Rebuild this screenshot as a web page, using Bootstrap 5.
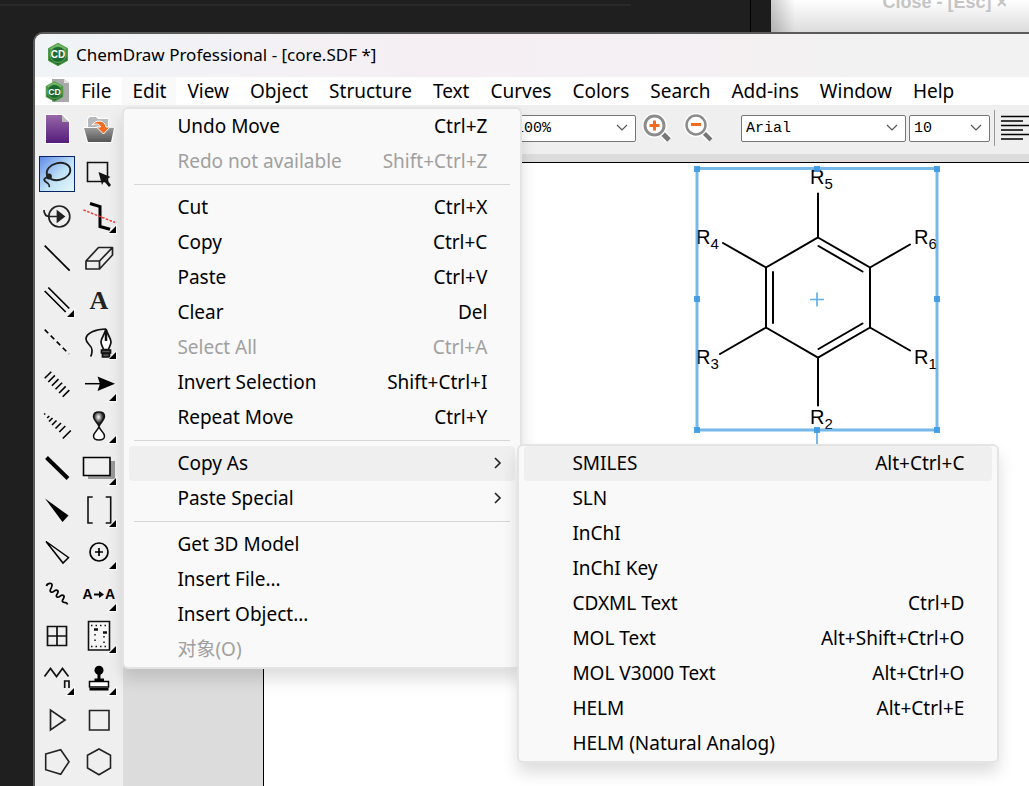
<!DOCTYPE html>
<html lang="en">
<head>
<meta charset="utf-8">
<meta name="viewport" content="width=device-width, initial-scale=1">
<title>ChemDraw Professional - [core.SDF *]</title>
<link href="https://cdn.jsdelivr.net/npm/bootstrap@5.3.0/dist/css/bootstrap.min.css" rel="stylesheet">
<style>
  body { background: #1f1f1f; color: #000; font: 19px/24px "Noto Sans", "Noto Sans CJK SC", sans-serif; }
  .behind-dark { background: #1f1f1f; border-right: 20px solid #1c1c1c; box-shadow: inset -1px 0 0 #000; }
  .behind-line { height: 2px; margin-top: 4px; margin-right: 120px; background: #292929; }
  .behind-light { width: 258px; background: linear-gradient(90deg, #0003, #0000 24px), linear-gradient(#fff, #dcdcdc); }
  .behind-light button { font: bold 18px/20px "Liberation Sans", sans-serif; color: #c4c4c4; margin: -8px 22px 0 0; }
  .behind { height: 32px; }
  .app-window { margin-left: 33px; min-height: 0; border: 2px solid #5a5a5a; border-right: 0; border-bottom: 0; border-radius: 10px 0 0 0; background: #efefef; }
  .app-title { height: 43px; padding: 0 0 2px 12px; gap: 7px; border-radius: 8px 0 0 0; background: linear-gradient(90deg, #f0f4f7, #f5eff3 38%, #f5f0f3 65%, #f2f2f2 85%); font-size: 17px; }
  .menu-strip { height: 28px; padding-left: 9px; background: #fff; }
  .menu-strip > ul { gap: 1px; }
  .menu-strip > ul > li > .menu-top { padding: 0 10px; height: 28px; line-height: 28px; border-radius: 0; color: #000; font-size: 19px; border: 0; }
  .menu-strip .menu-top.show { background: #f9f9f9; }
  .pop-menu { --bs-dropdown-font-size: 19px; padding: 0; margin: 0; border: 2px solid #e4e4e4; border-radius: 6px; background: #f9f9f9; background-clip: padding-box; box-shadow: 0 10px 16px #0002; color: #000; }
  .edit-menu { width: 400px; top: 30px; left: 0; }
  .copy-menu { width: 482px; top: -2px; left: 393px; }
  .pop-menu > li { display: flex; flex-direction: column; }
  .pop-menu .dropdown-item { height: 35px; margin: 0 5px; padding: 0 28px 2px 48px; width: auto; display: flex; align-items: center; justify-content: space-between; border-radius: 4px; color: #000; position: relative; }
  .pop-menu .dropdown-item.hot { background: #efefef; }
  .pop-menu .dropdown-item.disabled { color: #a0a0a0; }
  .pop-menu .dropdown-divider { margin: 5px 10px; border-color: #d6d6d6; opacity: 1; }
  .more { position: absolute; right: 13px; top: 11px; }
  .tool-side { width: 88px; padding: 0 3px 0 1px; background: #efefef; }
  .tool-grid { display: grid; grid-template-columns: 42px 42px; grid-auto-rows: 42px; }
  .tool-grid.files { grid-auto-rows: 48px; }
  .tool { display: block; padding: 0; border: 0; background: none; }
  .tool svg { display: block; }
  .tool.picked { margin: 3px; border: 1px solid #0a246a; background: linear-gradient(135deg, #5f8ae8, #bfe2f6 55%, #e4f8fb); }
  .tool.picked svg { margin: -4px; }
  .work-area, .sheet-row { min-height: 0; }
  .work-main { min-width: 0; }
  .tool-bar { height: 49px; padding: 0 0 3px 387px; background: #efefef; }
  .tool-bar .form-select { height: 27px; padding: 2px 24px 0 4px; border: 1px solid #767676; border-radius: 2px; color: #000; font: 15px/20px "Liberation Mono", monospace; background-color: #fff; background-position: right 7px center; background-size: 12px 8px;
    background-image: url("data:image/svg+xml,%3Csvg xmlns='http://www.w3.org/2000/svg' viewBox='0 0 12 8'%3E%3Cpath d='M1 1l5 5 5-5' fill='none' stroke='%23555' stroke-width='1.2'/%3E%3C/svg%3E"); }
  .tool-bar .zoom-pick { width: 126px; margin-right: 5px; }
  .font-pick { width: 165px; margin: 0 3px 0 24px; }
  .size-pick { width: 81px; margin-right: 4px; }
  .bar-rule { width: 1px; height: 36px; background: #999; margin-right: 5px; }
  .ruler { height: 8px; background: #dcdcdc; }
  .margin-area { width: 140px; background: #dcdcdc; }
  .sheet { background: #fff; border: solid #000; border-width: 1px 0 0 1px; }
  .with-top { border-top: 1px solid #000; }
  .molecule { position: absolute; left: 426px; top: 0; }
</style>
</head>
<body class="vh-100 overflow-hidden d-flex flex-column">

<svg width="0" height="0" class="position-absolute" aria-hidden="true">
  <defs>
    <linearGradient id="gGreen" x1="0" y1="0" x2="0" y2="1"><stop offset="0" stop-color="#4fa23f"/><stop offset="1" stop-color="#1f6a2c"/></linearGradient>
    <linearGradient id="gPurple" x1="0" y1="0" x2="0" y2="1"><stop offset="0" stop-color="#9766a8"/><stop offset="1" stop-color="#551d7c"/></linearGradient>
    <linearGradient id="gGrey" x1="0" y1="0" x2="0" y2="1"><stop offset="0" stop-color="#9a9a9a"/><stop offset="1" stop-color="#555"/></linearGradient>
    <radialGradient id="gBall" cx=".45" cy=".35" r=".6"><stop offset="0" stop-color="#fff"/><stop offset=".7" stop-color="#222"/></radialGradient>
    <symbol id="cdMark" viewBox="0 0 24 24">
      <path d="M12 .8 21.5 6v12L12 23.2 2.500 18V6z" fill="url(#gGreen)" stroke="#4f9a45"/>
      <path d="M12 1.500 21 6.400 12 9 3 6.400z" fill="#8cc87a" opacity=".7"/>
      <circle cx="12" cy="12" r="8" fill="#1b6a30" stroke="#73b765" stroke-width=".8"/>
      <text x="12" y="15.500" text-anchor="middle" font-family="Liberation Sans, sans-serif" font-weight="bold" font-size="10" fill="#fff">CD</text>
    </symbol>
    <symbol id="corner" viewBox="0 0 42 42"><path d="M39 29v10h-10z" fill="#fff"/><path d="M38 31v7h-7z" fill="#000"/></symbol>
  </defs>
</svg>

<div class="behind d-flex flex-shrink-0">
  <div class="behind-dark flex-fill"><div class="behind-line"></div></div>
  <div class="behind-light d-flex justify-content-end align-items-start"><button type="button" class="btn p-0 border-0">Close - [Esc] ×</button></div>
</div>

<div class="app-window flex-fill d-flex flex-column">
  <header class="app-title d-flex align-items-center flex-shrink-0">
    <svg width="22" height="25" viewBox="1 0 22 24" aria-hidden="true"><use href="#cdMark" width="24" height="24"/></svg>
    <span>ChemDraw Professional - [core.SDF *]</span>
  </header>

  <nav class="menu-strip d-flex align-items-center flex-shrink-0" aria-label="Menu bar">
    <svg width="27" height="26" viewBox="0 0 27 26" aria-hidden="true">
      <path d="M8 1h12l5 4v19H8z" fill="#a9a9a9"/><path d="M20 1v4h5z" fill="#e4e4e4"/>
      <use href="#cdMark" x="0" y="3" width="21" height="21"/>
    </svg>
    <ul class="list-unstyled d-flex m-0">
      <li><button type="button" class="btn menu-top">File</button></li>
      <li class="position-relative">
        <button type="button" class="btn menu-top show" aria-expanded="true">Edit</button>
        <ul class="dropdown-menu show pop-menu edit-menu">
          <li><button type="button" class="dropdown-item"><span>Undo Move</span><span>Ctrl+Z</span></button></li>
          <li><button type="button" class="dropdown-item disabled" disabled><span>Redo not available</span><span>Shift+Ctrl+Z</span></button></li>
          <li><hr class="dropdown-divider"></li>
          <li><button type="button" class="dropdown-item"><span>Cut</span><span>Ctrl+X</span></button></li>
          <li><button type="button" class="dropdown-item"><span>Copy</span><span>Ctrl+C</span></button></li>
          <li><button type="button" class="dropdown-item"><span>Paste</span><span>Ctrl+V</span></button></li>
          <li><button type="button" class="dropdown-item"><span>Clear</span><span>Del</span></button></li>
          <li><button type="button" class="dropdown-item disabled" disabled><span>Select All</span><span>Ctrl+A</span></button></li>
          <li><button type="button" class="dropdown-item"><span>Invert Selection</span><span>Shift+Ctrl+I</span></button></li>
          <li><button type="button" class="dropdown-item"><span>Repeat Move</span><span>Ctrl+Y</span></button></li>
          <li><hr class="dropdown-divider"></li>
          <li class="position-relative">
            <button type="button" class="dropdown-item hot" aria-expanded="true"><span>Copy As</span><svg class="more" width="9" height="12" viewBox="0 0 9 12"><path d="M2 1l5 5-5 5" fill="none" stroke="#222" stroke-width="1.600"/></svg></button>
            <ul class="dropdown-menu show pop-menu copy-menu">
              <li><button type="button" class="dropdown-item hot"><span>SMILES</span><span>Alt+Ctrl+C</span></button></li>
              <li><button type="button" class="dropdown-item">SLN</button></li>
              <li><button type="button" class="dropdown-item">InChI</button></li>
              <li><button type="button" class="dropdown-item">InChI Key</button></li>
              <li><button type="button" class="dropdown-item"><span>CDXML Text</span><span>Ctrl+D</span></button></li>
              <li><button type="button" class="dropdown-item"><span>MOL Text</span><span>Alt+Shift+Ctrl+O</span></button></li>
              <li><button type="button" class="dropdown-item"><span>MOL V3000 Text</span><span>Alt+Ctrl+O</span></button></li>
              <li><button type="button" class="dropdown-item"><span>HELM</span><span>Alt+Ctrl+E</span></button></li>
              <li><button type="button" class="dropdown-item">HELM (Natural Analog)</button></li>
            </ul>
          </li>
          <li><button type="button" class="dropdown-item"><span>Paste Special</span><svg class="more" width="9" height="12" viewBox="0 0 9 12"><path d="M2 1l5 5-5 5" fill="none" stroke="#222" stroke-width="1.600"/></svg></button></li>
          <li><hr class="dropdown-divider"></li>
          <li><button type="button" class="dropdown-item">Get 3D Model</button></li>
          <li><button type="button" class="dropdown-item">Insert File...</button></li>
          <li><button type="button" class="dropdown-item">Insert Object...</button></li>
          <li><button type="button" class="dropdown-item disabled" disabled lang="zh">对象(O)</button></li>
        </ul>
      </li>
      <li><button type="button" class="btn menu-top">View</button></li>
      <li><button type="button" class="btn menu-top">Object</button></li>
      <li><button type="button" class="btn menu-top">Structure</button></li>
      <li><button type="button" class="btn menu-top">Text</button></li>
      <li><button type="button" class="btn menu-top">Curves</button></li>
      <li><button type="button" class="btn menu-top">Colors</button></li>
      <li><button type="button" class="btn menu-top">Search</button></li>
      <li><button type="button" class="btn menu-top">Add-ins</button></li>
      <li><button type="button" class="btn menu-top">Window</button></li>
      <li><button type="button" class="btn menu-top">Help</button></li>
    </ul>
  </nav>

  <div class="work-area d-flex flex-fill">
    <aside class="tool-side flex-shrink-0 overflow-hidden">
      <div class="tool-grid files">
        <button type="button" class="tool" aria-label="New document"><svg width="42" height="48"><path d="M9 9h18l7 7v23H9z" fill="#fff"/><path d="M10 10h16v7h7v21H10z" fill="url(#gPurple)"/><path d="M26 10v7h7z" fill="#bbb"/></svg></button>
        <button type="button" class="tool" aria-label="Open"><svg width="42" height="48"><path d="M9 14l2-3h8l2 2h9l2 10h5l-3 15H9L5 22h4z" fill="#fff"/><path d="M10 22v-8l2-2h6l2 2h10v8z" fill="#b5b9bc"/><path d="M6 23h30l-3 14H10z" fill="url(#gGrey)"/><path d="M14 20c4-6 13-5 14 2h4l-6.500 7-7-7h4c-1-3-4-4-8.500-2z" fill="#f26b21" stroke="#fff"/></svg></button>
      </div>
      <div class="tool-grid">
        <button type="button" class="tool picked" aria-label="Lasso"><svg width="42" height="42" fill="none" stroke="#222" stroke-width="1.800"><ellipse cx="22.500" cy="18.500" rx="12" ry="8.500" transform="rotate(-14 22.500 18.500)"/><circle cx="13" cy="23.500" r="2" fill="#222"/><path d="M12 24c-4 1-5 3-2 5s4 3 3 5"/></svg></button>
        <button type="button" class="tool" aria-label="Marquee"><svg width="42" height="42"><path d="M9.500 9.500h20v19h-20z" fill="none" stroke="#111" stroke-width="1.600"/><path d="M20.500 19l12 5-4 2 4.500 6-2 2-5-6-2 4z" fill="#111"/></svg></button>

        <button type="button" class="tool" aria-label="Structure perspective"><svg width="42" height="42" fill="none" stroke="#222" stroke-width="1.700"><circle cx="23.300" cy="21.500" r="10.500"/><path d="M8 15c0 4 2 6.500 6 6.500h8"/><path d="M21.500 16.500l6.500 5-6.500 5z" fill="#222"/></svg></button>
        <button type="button" class="tool" aria-label="Dihedral"><svg width="42" height="42" fill="none"><path d="M12 8.500l10 3v20l10 2.800" stroke="#000" stroke-width="3"/><path d="M5.500 15L37 27.500" stroke="#f33" stroke-width="1.500" stroke-dasharray="2.500 1.500"/><use href="#corner"/></svg></button>

        <button type="button" class="tool" aria-label="Solid bond"><svg width="42" height="42"><path d="M8.700 8.700l25 25" stroke="#000" stroke-width="1.700"/></svg></button>
        <button type="button" class="tool" aria-label="Eraser"><svg width="42" height="42" fill="none" stroke="#222" stroke-width="1.700" stroke-linejoin="round"><path d="M8 24h13.500v8H8zM8 24L20.500 10.500h14L21.500 24M34.500 10.500v7.500L21.500 32"/></svg></button>

        <button type="button" class="tool" aria-label="Double bond"><svg width="42" height="42"><path d="M8.700 12l21 21M12.300 8.500l21 21" stroke="#000" stroke-width="1.700"/><use href="#corner"/></svg></button>
        <button type="button" class="tool" aria-label="Text"><svg width="42" height="42"><text x="21" y="30" text-anchor="middle" font-family="Liberation Serif, serif" font-weight="bold" font-size="26" fill="#222">A</text></svg></button>

        <button type="button" class="tool" aria-label="Dashed bond"><svg width="42" height="42"><path d="M8.700 8.700L33 33" stroke="#000" stroke-width="1.700" stroke-dasharray="5 3.500"/></svg></button>
        <button type="button" class="tool" aria-label="Pen"><svg width="42" height="42" fill="none" stroke="#111" stroke-width="1.700"><path d="M28 8C18 8 8 12 8 18c0 5 6 6 6 11 0 3 0 5-1.500 6.500"/><path d="M28 8c-1 5-5 9-5 13 0 3 2 5 2.500 7.500h5C31 26 33 24 33 21c0-4-4-8-5-13zM28 8v11" fill="#fff"/><path d="M28 9v11" stroke-width="2.500"/><path d="M23.500 29h9v3h-9zM24.500 32.500h7V36h-7z" fill="#555"/><use href="#corner" stroke="none"/></svg></button>

        <button type="button" class="tool" aria-label="Hashed bond"><svg width="42" height="42"><path d="M8.700 15.300l6.600-6.600m-3 10.300l6.600-6.600m-3 10.300l6.600-6.600m-3 10.200l6.600-6.600m-3 10.300l6.600-6.600m-3 10.300l6.600-6.600" stroke="#000" stroke-width="1.600"/></svg></button>
        <button type="button" class="tool" aria-label="Arrow"><svg width="42" height="42"><path d="M7 20.700h16" stroke="#000" stroke-width="1.500"/><path d="M19.500 13.500L37 20.700l-17.500 7.200 2.500-7.200z"/><use href="#corner"/></svg></button>

        <button type="button" class="tool" aria-label="Hashed wedge"><svg width="42" height="42"><path d="M8.200 9.500l1-1m2 4.500l2-2m-.2 5.500l3.500-3.500m-.5 7l4.500-4.500m-1 8l5.500-5.500m-1.700 9l6-6m-2.500 12.500l8-8" stroke="#000" stroke-width="1.600"/></svg></button>
        <button type="button" class="tool" aria-label="Orbital"><svg width="42" height="42" stroke="#111" stroke-width="1.500"><path d="M21 21.500c-1-4-5.500-6-5.500-10 0-3 2.500-4.500 5.500-4.500s5.500 1.500 5.500 4.500c0 4-4.500 6-5.500 10z" fill="url(#gBall)"/><path d="M21 21.500c-1 4-5.500 6-5.500 9.500 0 2.500 2.500 4 5.500 4s5.500-1.500 5.500-4c0-3.500-4.500-5.500-5.500-9.500z" fill="#fff"/><use href="#corner" stroke="none"/></svg></button>

        <button type="button" class="tool" aria-label="Bold bond"><svg width="42" height="42"><path d="M10.500 10.500L32 31.500" stroke="#000" stroke-width="4"/></svg></button>
        <button type="button" class="tool" aria-label="Drawing elements"><svg width="42" height="42"><path d="M10 14h27v18H10z" fill="#999"/><path d="M5.500 10.500h26.500v18H5.500z" fill="#f0f0f0" stroke="#000" stroke-width="1.600"/><use href="#corner"/></svg></button>

        <button type="button" class="tool" aria-label="Wedge bond"><svg width="42" height="42"><path d="M9 9.500l23.500 17-6 6.500z"/></svg></button>
        <button type="button" class="tool" aria-label="Brackets"><svg width="42" height="42"><path d="M14.700 8H10v26h4.700M27.700 8h5v26h-5" fill="none" stroke="#111" stroke-width="1.600"/><use href="#corner"/></svg></button>

        <button type="button" class="tool" aria-label="Hollow wedge"><svg width="42" height="42"><path d="M10 10.500l22.500 16-5.500 5.500z" fill="none" stroke="#000" stroke-width="1.500"/></svg></button>
        <button type="button" class="tool" aria-label="Chemical symbol"><svg width="42" height="42"><path d="M21 12a9 9 0 100 18 9 9 0 000-18M21 17v8M17 21h8" fill="none" stroke="#000" stroke-width="1.700"/><use href="#corner"/></svg></button>

        <button type="button" class="tool" aria-label="Wavy bond"><svg width="42" height="42"><path d="M10.500 13c.5-3 6-4 5.500-.5s-3.500 5-1 6.500 4-3.500 6.500-1.500-3 5-.5 6.500 4-3.500 6.500-1.500-3 5-.5 6.500 4-.5 4.500 2.500" fill="none" stroke="#000" stroke-width="1.700"/></svg></button>
        <button type="button" class="tool" aria-label="Reaction atom map"><svg width="42" height="42"><g font-family="Liberation Sans, sans-serif" font-weight="bold" font-size="14"><text x="4.500" y="26">A</text><text x="27" y="26">A</text></g><path d="M16 21.500h6" stroke="#000" stroke-width="2"/><path d="M21 18l5 3.500-5 3.500z"/><use href="#corner"/></svg></button>

        <button type="button" class="tool" aria-label="Table"><svg width="42" height="42"><path d="M11.500 11.500h19v19h-19zM21 11v20M11 21h20" fill="none" stroke="#111" stroke-width="1.700"/></svg></button>
        <button type="button" class="tool" aria-label="Templates"><svg width="42" height="42" fill="none" stroke="#111"><path d="M10.500 6.500h21v28.500h-21z" fill="#f6f6f6" stroke-width="1.600"/><path d="M13 10.500h17M13 31.500h17" stroke-width="1.500" stroke-dasharray="1.500 3"/><path d="M16 14.500h4M25 17.500h4" stroke-width="2.500"/><path d="M17 19v9M26 21v7" stroke-width="1.500" stroke-dasharray="1.500 4"/><use href="#corner" stroke="none"/></svg></button>

        <button type="button" class="tool" aria-label="Acyclic chain"><svg width="42" height="42"><path d="M8.500 19.500l6-8 6 8 6-8 6 8M28.700 31v-7h4.300v7" fill="none" stroke="#111" stroke-width="1.700"/><use href="#corner"/></svg></button>
        <button type="button" class="tool" aria-label="Stamp"><svg width="42" height="42"><circle cx="21" cy="13.300" r="4.500"/><path d="M19.500 16h3v5.500H26V24H16.500v-2.500h3zM11.500 31h19v2.500h-19z"/><path d="M11.500 24.500h19V30h-19z" fill="#fff" stroke="#000" stroke-width="1.500"/><use href="#corner"/></svg></button>

        <button type="button" class="tool" aria-label="Play"><svg width="42" height="42"><path d="M14.500 11v20l14.500-10z" fill="none" stroke="#222" stroke-width="1.700"/></svg></button>
        <button type="button" class="tool" aria-label="Four-membered ring"><svg width="42" height="42"><path d="M11.500 11.500h19.500v19.500h-19.500z" fill="none" stroke="#222" stroke-width="1.600"/></svg></button>

        <button type="button" class="tool" aria-label="Five-membered ring"><svg width="42" height="42"><path d="M9.700 13l15-4.300L33 20.700l-8.300 12.600-15-4.600z" fill="none" stroke="#222" stroke-width="1.600"/></svg></button>
        <button type="button" class="tool" aria-label="Six-membered ring"><svg width="42" height="42"><path d="M21 8l11.500 6.300V27L21 33.700 9.500 27V14.300z" fill="none" stroke="#222" stroke-width="1.600"/></svg></button>
      </div>
    </aside>

    <main class="work-main flex-fill d-flex flex-column">
      <div class="tool-bar d-flex align-items-center flex-shrink-0">
        <select class="form-select flex-shrink-0 zoom-pick" aria-label="Zoom"><option>100%</option></select>
        <button type="button" class="tool me-2" aria-label="Zoom in"><svg width="34" height="34" fill="none"><path d="M21 22l7 7" stroke="#fff" stroke-width="8"/><path d="M21 22l7 7" stroke="#777" stroke-width="5"/><circle cx="13.500" cy="14.500" r="10" fill="#fff" stroke="#fff" stroke-width="5"/><circle cx="13.500" cy="14.500" r="9.500" stroke="#8c8c8c" stroke-width="3"/><path d="M13.500 9.500v10M8.500 14.500h10" stroke="#f26b21" stroke-width="3"/></svg></button>
        <button type="button" class="tool" aria-label="Zoom out"><svg width="34" height="34" fill="none"><path d="M20 21l8 8" stroke="#fff" stroke-width="7"/><path d="M20 21l8 8" stroke="#777" stroke-width="4"/><circle cx="13" cy="14" r="10" fill="#fff" stroke="#fff" stroke-width="4"/><circle cx="13" cy="14" r="9.500" stroke="#8c8c8c" stroke-width="2.500"/><path d="M8 13.500h10" stroke="#f26b21" stroke-width="3"/></svg></button>
        <select class="form-select flex-shrink-0 font-pick" aria-label="Font"><option>Arial</option></select>
        <select class="form-select flex-shrink-0 size-pick" aria-label="Size"><option>10</option></select>
        <span class="bar-rule flex-shrink-0"></span>
        <button type="button" class="tool" aria-label="Align left"><svg width="30" height="26"><path d="M1 1.500h29M1 6h22M1 10.500h29M1 15h22M1 19.500h29M1 24h22" stroke="#000" stroke-width="1.500"/></svg></button>
      </div>
      <div class="ruler flex-shrink-0"></div>
      <div class="sheet-row d-flex flex-fill">
        <div class="margin-area with-top flex-shrink-0"></div>
        <div class="sheet flex-fill position-relative overflow-hidden">
          <svg class="molecule" width="260" height="290" viewBox="690 163 260 290" role="img" aria-label="Benzene ring with six R groups">
            <g fill="none" stroke="#000" stroke-width="2" stroke-linecap="round">
              <path d="M818 237.500L870 267.500V327.500L818 357.500L766 327.500V267.500z"/>
              <path d="M818.500 246l44 25.500M818.500 349l44-25.500M773 272v51"/>
              <path d="M818 237.500V193.500M818 357.500V405.500M766 267.500L723 243M766 327.500L720 354M870 267.500L910 244.500M870 327.500L910 350.500"/>
            </g>
            <g font-family="Liberation Sans, sans-serif" font-size="20">
              <text x="810" y="184">R<tspan font-size="15" dy="5">5</tspan></text>
              <text x="696" y="244">R<tspan font-size="15" dy="5">4</tspan></text>
              <text x="914" y="244">R<tspan font-size="15" dy="5">6</tspan></text>
              <text x="696" y="364">R<tspan font-size="15" dy="5">3</tspan></text>
              <text x="914" y="364">R<tspan font-size="15" dy="5">1</tspan></text>
              <text x="810" y="424">R<tspan font-size="15" dy="5">2</tspan></text>
            </g>
            <g stroke="#3d9ae3" fill="none">
              <path d="M697 168.500h240v261.500h-240z" stroke-width="3" opacity=".7"/>
              <path d="M817 292.500v14M810 299.500h14M817 430v23" stroke-width="1.700" opacity=".8"/>
            </g>
            <path d="M694 166h6v6h-6zM814 166h6v6h-6zM934 166h6v6h-6zM694 296h6v6h-6zM934 296h6v6h-6zM694 427h6v6h-6zM814 427h6v6h-6zM934 427h6v6h-6z" fill="#3d9ae3" opacity=".9"/>
          </svg>
        </div>
      </div>
    </main>
  </div>
</div>
<script src="https://cdn.jsdelivr.net/npm/bootstrap@5.3.0/dist/js/bootstrap.bundle.min.js"></script>
</body>
</html>
